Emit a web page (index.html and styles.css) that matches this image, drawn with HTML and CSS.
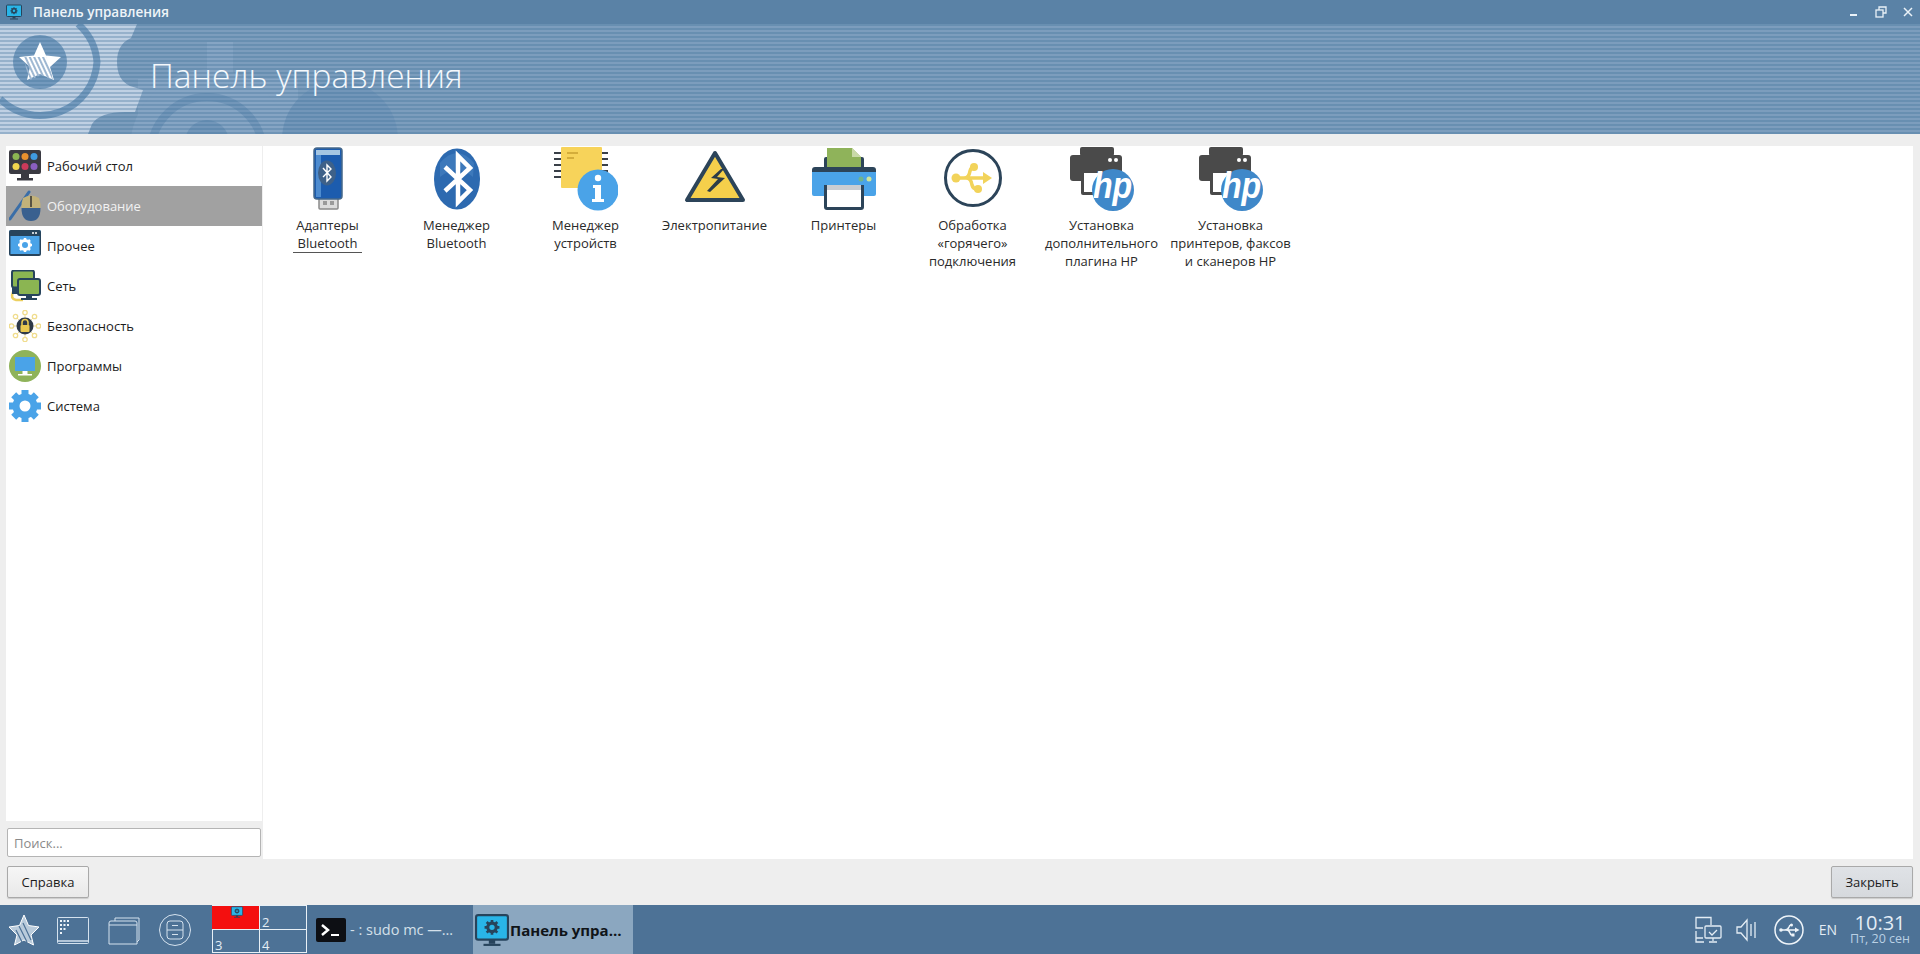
FILE: index.html
```html
<!DOCTYPE html>
<html lang="ru">
<head>
  <meta charset="UTF-8" />
  <title>Панель управления</title>
  <link rel="stylesheet" href="styles.css">
</head>
<body>
  <svg class="defs" width="0" height="0">
    <defs>
      <pattern id="banner-stripes" width="4" height="4" patternUnits="userSpaceOnUse">
        <rect width="4" height="2" fill="#3f7099" opacity=".32"/>
      </pattern>
      <pattern id="star-stripes" width="4" height="4" patternUnits="userSpaceOnUse" patternTransform="rotate(-25)">
        <rect width="2" height="4" fill="#9fb8d2"/>
      </pattern>
      <symbol id="gear" viewBox="0 0 32 32">
        <circle cx="16" cy="16" r="9" fill="none" stroke="#4aa3e8" stroke-width="7"/>
        <g stroke="#4aa3e8" stroke-width="7">
          <path d="M16 0v8M16 24v8M0 16h8M24 16h8M4.700 4.700l5 5M22.300 22.300l5 5M27.300 4.700l-5 5M9.700 22.300l-5 5"/>
        </g>
      </symbol>
      <symbol id="hp-printer" viewBox="0 0 64 64">
        <rect x="10" y="0" width="34" height="9" rx="2" fill="#4a4a4a"/>
        <path d="M0 11a3 3 0 0 1 3-3h46a3 3 0 0 1 3 3v21a2 2 0 0 1-2 2H3a3 3 0 0 1-3-3z" fill="#4a4a4a"/>
        <circle cx="40" cy="13" r="2" fill="#fff"/>
        <circle cx="46" cy="13" r="2" fill="#fff"/>
        <path d="M11 23h30v25H13a2 2 0 0 1-2-2z" fill="#4a4a4a"/>
        <rect x="14" y="26" width="26" height="19" fill="#fff"/>
        <circle cx="43" cy="43" r="21" fill="#3f88c9"/>
        <text x="44" y="49" transform="translate(-8 -15) scale(1.150 1.350)" class="hp-text">hp</text>
      </symbol>
      <symbol id="monitor-gear" viewBox="0 0 32 32">
        <rect x="1" y="2" width="30" height="23" rx="2" fill="#29b5e8" stroke="#27445c" stroke-width="2"/>
        <rect x="13" y="25" width="6" height="4" fill="#27445c"/>
        <rect x="8" y="29" width="16" height="2" fill="#27445c"/>
        <circle cx="16" cy="13.500" r="4" fill="none" stroke="#27445c" stroke-width="3"/>
        <path d="M16 6.500v3M16 17.500v3M9 13.500h3M20 13.500h3M11 8.500l2 2M19 16.500l2 2M21 8.500l-2 2M13 16.500l-2 2" stroke="#27445c" stroke-width="2.500"/>
      </symbol>
    </defs>
  </svg>

  <div class="app">
    <header class="titlebar">
      <svg class="titlebar-icon" width="16" height="16"><use href="#monitor-gear"/></svg>
      <span class="titlebar-name">Панель управления</span>
      <div class="window-buttons">
        <svg width="12" height="12" viewBox="0 0 12 12"><rect x="2" y="8" width="7" height="2" fill="#eaf2f8"/></svg>
        <svg width="12" height="12" viewBox="0 0 12 12" fill="none" stroke="#eaf2f8" stroke-width="1.300"><rect x="1" y="4" width="7" height="7"/><path d="M4 4V1h7v6H8"/></svg>
        <svg width="12" height="12" viewBox="0 0 12 12" stroke="#eaf2f8" stroke-width="1.500"><path d="M2 2l8 8M10 2l-8 8"/></svg>
      </div>
    </header>

    <div class="banner">
      <svg class="banner-art" width="1920" height="110" viewBox="0 0 1920 110">
        <rect x="138" y="55" width="160" height="55" fill="#86a5c4"/>
        <circle cx="210" cy="125" r="80" fill="#86a5c4"/>
        <rect x="207" y="18" width="26" height="50" fill="#86a5c4"/>
        <circle cx="207" cy="129" r="56" fill="none" stroke="#7296b9" stroke-width="8"/>
        <circle cx="207" cy="118" r="22" fill="#7296b9"/>
        <circle cx="340" cy="115" r="58" fill="#7296b9"/>
        <path d="M0 0H137L131 14Q117 20 117 38Q117 56 130 62L143 66L135 88H125Q100 88 92 100L88 110H0Z" fill="#bfd0e3"/>
        <path d="M0 75a57 57 0 0 0 97-37A57 57 0 0 0 78 0" fill="none" stroke="#7399bd" stroke-width="7"/>
        <circle cx="40" cy="38" r="27" fill="#7399bd"/>
        <rect width="1920" height="110" fill="url(#banner-stripes)"/>
        <path d="M40 18l6 13.500 15 1.500-11 10 4 13-14-6-13 6 3-13-11-10 15-1.500z" fill="#fff"/>
        <path d="M26 44l4 12 11-5 12 5-3-13-4-10-22 0z" fill="url(#star-stripes)"/>
      </svg>
      <h1 class="banner-title">Панель управления</h1>
    </div>

    <div class="workspace">
      <div class="left-col">
        <ul class="category-list">
          <li class="category">
            <svg class="category-icon" viewBox="0 0 32 32">
              <rect x="0" y="0" width="32" height="24" rx="2" fill="#3a3a42"/>
              <rect x="12" y="24" width="8" height="4" fill="#3a3a42"/><rect x="8" y="28" width="16" height="2.500" fill="#3a3a42"/>
              <circle cx="7" cy="6.500" r="3.500" fill="#8bb552"/><circle cx="16" cy="6.500" r="3.500" fill="#e8902e"/><circle cx="25" cy="6.500" r="3.500" fill="#3f9ae0"/>
              <circle cx="7" cy="16.500" r="3.500" fill="#f0d44e"/><circle cx="16" cy="16.500" r="3.500" fill="#cc3a5a"/><circle cx="25" cy="16.500" r="3.500" fill="#8a5fc0"/>
            </svg>
            <span>Рабочий стол</span>
          </li>
          <li class="category selected">
            <svg class="category-icon" viewBox="0 0 32 32">
              <path d="M1 29L20 2" stroke="#3a6ea8" stroke-width="3" stroke-linecap="round"/>
              <path d="M14 8q8-5 16 0 2 6 1.500 10H12.500q-.5-5 1.500-10z" fill="#c2b27a"/>
              <path d="M12.500 18h19q0 13-9.500 13t-9.500-13z" fill="#39608f"/>
              <path d="M22 6v11" stroke="#333" stroke-width="1.500"/>
            </svg>
            <span>Оборудование</span>
          </li>
          <li class="category">
            <svg class="category-icon" viewBox="0 0 32 32">
              <rect x="0" y="0" width="32" height="25" rx="2" fill="#4aa3e8"/>
              <path d="M0 2a2 2 0 0 1 2-2h28a2 2 0 0 1 2 2v4H0zM0 6h1.500v18h29V6H32v18a2 2 0 0 1-2 2H2a2 2 0 0 1-2-2z" fill="#27445c"/>
              <circle cx="24" cy="3" r="1" fill="#fff"/><circle cx="27" cy="3" r="1" fill="#fff"/>
              <circle cx="16" cy="15" r="4.500" fill="none" stroke="#fff" stroke-width="3"/>
              <path d="M16 8v3M16 19v3M9 15h3M20 15h3M11 10l2 2M19 18l2 2M21 10l-2 2M13 18l-2 2" stroke="#fff" stroke-width="2.500"/>
            </svg>
            <span>Прочее</span>
          </li>
          <li class="category">
            <svg class="category-icon" viewBox="0 0 32 32">
              <path d="M4 22q-3 7 3 8h7" fill="none" stroke="#ecd060" stroke-width="2.500"/>
              <rect x="3" y="0.500" width="22" height="17" rx="2" fill="#8bb552" stroke="#27445c" stroke-width="2"/>
              <rect x="3" y="17" width="8" height="7" fill="#27445c"/>
              <rect x="9" y="9" width="22" height="16" rx="2" fill="#8bb552" stroke="#27445c" stroke-width="2"/>
              <rect x="17" y="26" width="6" height="2" fill="#27445c"/><rect x="12" y="28" width="16" height="2" fill="#27445c"/>
            </svg>
            <span>Сеть</span>
          </li>
          <li class="category">
            <svg class="category-icon" viewBox="0 0 32 32">
              <g stroke="#f1de9a" stroke-width="1">
                <path d="M16 16L4 16M16 16L28 16M16 16L16 4M16 16L16 28M16 16L7 7M16 16L25 7M16 16L7 25M16 16L25 25"/>
              </g>
              <g fill="#fff" stroke="#f0dd8e" stroke-width="1.300">
                <circle cx="2.500" cy="16" r="2.200"/><circle cx="29.500" cy="16" r="2.200"/><circle cx="16" cy="2.500" r="2.200"/><circle cx="16" cy="29.500" r="2.200"/>
                <circle cx="6.500" cy="6.500" r="2.200"/><circle cx="25.500" cy="6.500" r="2.200"/><circle cx="6.500" cy="25.500" r="2.200"/><circle cx="25.500" cy="25.500" r="2.200"/>
              </g>
              <circle cx="16" cy="16" r="8.500" fill="#2f3a48"/>
              <rect x="11.500" y="15" width="9" height="7" rx="1" fill="#e8c850"/>
              <path d="M13 15v-2.500a3 3 0 0 1 6 0V15" fill="none" stroke="#e8c850" stroke-width="1.600"/>
            </svg>
            <span>Безопасность</span>
          </li>
          <li class="category">
            <svg class="category-icon" viewBox="0 0 32 32">
              <circle cx="16" cy="16" r="16" fill="#8fb35a"/>
              <rect x="6" y="7" width="20" height="14" fill="#4aa3e8"/>
              <rect x="13.500" y="21" width="5" height="3" fill="#fff"/><rect x="9" y="24" width="14" height="1.500" fill="#fff"/>
            </svg>
            <span>Программы</span>
          </li>
          <li class="category">
            <svg class="category-icon" viewBox="0 0 32 32"><use href="#gear"/></svg>
            <span>Система</span>
          </li>
        </ul>
        <input class="search" type="text" placeholder="Поиск...">
      </div>

      <main class="applets">
        <div class="applet">
          <svg class="applet-icon" viewBox="0 0 64 64">
            <path d="M23 50h19v11a1 1 0 0 1-1 1H24a1 1 0 0 1-1-1z" fill="#dcdcdc" stroke="#8a8a8a" stroke-width="1.500"/>
            <rect x="27" y="54" width="4" height="4" fill="#9a9a9a"/><rect x="34" y="54" width="4" height="4" fill="#9a9a9a"/>
            <rect x="18" y="1" width="28" height="51" rx="3" fill="#1c5cae" stroke="#46688a" stroke-width="1.500"/>
            <rect x="20" y="3" width="24" height="5" fill="#a5c6e2"/>
            <path d="M20 8h5v42h-5z" fill="#4e8ccf"/>
            <ellipse cx="31" cy="26" rx="9" ry="12.500" fill="#3e6189"/>
            <path d="M27 21l8 9-4 4V18l4 4-8 8" fill="none" stroke="#fff" stroke-width="1.400"/>
          </svg>
          <span class="applet-label focused">Адаптеры<br>Bluetooth</span>
        </div>
        <div class="applet">
          <svg class="applet-icon" viewBox="0 0 64 64">
            <ellipse cx="32" cy="32" rx="23" ry="30.500" fill="#2d6ab0"/>
            <path d="M15 16Q32-4 49 16L48 30Q32 16 15 30z" fill="#4a85c4" opacity=".55"/>
            <path d="M20 20l25 23-12 12V9l12 12-25 23" fill="none" stroke="#fff" stroke-width="4.500"/>
          </svg>
          <span class="applet-label">Менеджер<br>Bluetooth</span>
        </div>
        <div class="applet">
          <svg class="applet-icon" viewBox="0 0 64 64">
            <g stroke="#3a4048" stroke-width="2.200">
              <path d="M0 6h8M0 12h8M0 18h8M0 24h8M0 30h8M47 6h7M47 12h7M47 18h7M47 24h7"/>
            </g>
            <rect x="7" y="0" width="41" height="41" rx="1" fill="#f7d35a"/>
            <path d="M13 6h11M13 11h7" stroke="#c9a130" stroke-width="1.300"/>
            <circle cx="44" cy="43" r="20.500" fill="#4aa3e8"/>
            <circle cx="44" cy="31" r="3.200" fill="#fff"/>
            <path d="M39 38h8v14h3v3H38v-3h3V41h-2z" fill="#fff"/>
          </svg>
          <span class="applet-label">Менеджер<br>устройств</span>
        </div>
        <div class="applet">
          <svg class="applet-icon" viewBox="0 0 64 64">
            <path d="M32 6L4 53h56z" fill="#f5cf4b" stroke="#2c4459" stroke-width="4" stroke-linejoin="round"/>
            <path d="M38 22L28 31l7 1-11 12 3 1 15-14-8-1 7-8z" fill="#2c3c48"/>
          </svg>
          <span class="applet-label">Электропитание</span>
        </div>
        <div class="applet">
          <svg class="applet-icon" viewBox="0 0 64 64">
            <rect x="12" y="10" width="40" height="24" rx="2" fill="#2c4459"/>
            <path d="M15 1h25l9 9v14H15z" fill="#8fb35a"/>
            <path d="M40 1l9 9h-9z" fill="#c9d9a8"/>
            <path d="M0 23a3 3 0 0 1 3-3h58a3 3 0 0 1 3 3v2H0z" fill="#2c4459"/>
            <path d="M0 25h64v22a2 2 0 0 1-2 2H2a2 2 0 0 1-2-2z" fill="#4aa3e8"/>
            <circle cx="49" cy="32" r="2.500" fill="#6fb38c"/><circle cx="57" cy="32" r="2.500" fill="#cfe59a"/>
            <path d="M12 38h40v22a3 3 0 0 1-3 3H15a3 3 0 0 1-3-3z" fill="#2c4459"/>
            <rect x="15" y="38" width="34" height="5" fill="#c9cdd2"/>
            <rect x="15" y="43" width="34" height="17" fill="#fff"/>
          </svg>
          <span class="applet-label">Принтеры</span>
        </div>
        <div class="applet">
          <svg class="applet-icon" viewBox="0 0 64 64">
            <circle cx="32" cy="31" r="27.500" fill="#fff" stroke="#2c4459" stroke-width="3"/>
            <g fill="none" stroke="#f2d35a" stroke-width="3.500">
              <path d="M14 31h32M23 31Q28 31 29 24Q30 20 33 20M25 31Q30 31 31 38Q32 42 36 42"/>
            </g>
            <circle cx="15" cy="31" r="4.500" fill="#f2d35a"/>
            <circle cx="33" cy="20" r="4" fill="#f2d35a"/>
            <circle cx="37" cy="42" r="4" fill="#f2d35a"/>
            <path d="M42 25l9 6-9 6z" fill="#f2d35a"/>
          </svg>
          <span class="applet-label">Обработка<br>«горячего»<br>подключения</span>
        </div>
        <div class="applet">
          <svg class="applet-icon"><use href="#hp-printer"/></svg>
          <span class="applet-label">Установка<br>дополнительного<br>плагина HP</span>
        </div>
        <div class="applet">
          <svg class="applet-icon"><use href="#hp-printer"/></svg>
          <span class="applet-label">Установка<br>принтеров, факсов<br>и сканеров HP</span>
        </div>
      </main>
    </div>

    <div class="dialog-buttons">
      <button class="btn">Справка</button>
      <button class="btn btn-default">Закрыть</button>
    </div>

    <footer class="taskbar">
      <svg class="start" width="32" height="32" viewBox="0 0 32 32">
        <path d="M16 1l4.500 10.500L31 13l-8 8 2.500 10L16 26l-9.500 5L9 21l-8-8 10.500-1.500z" fill="#b9cbdb" stroke="#fff"/>
        <path d="M11 12l8 16M15 9l8 17M8 16l6 12" stroke="#4d7296" stroke-width="1.200"/>
      </svg>
      <svg class="launcher" width="32" height="32" viewBox="0 0 32 32" fill="none" stroke="#d5e2ee" stroke-width="1">
        <rect x=".5" y="3.500" width="31" height="26" rx="1"/>
        <path d="M.5 27h31" stroke-width="1.500"/>
        <path d="M3 6h2v2H3zM6.500 6h2v2h-2zM10 6h2v2h-2zM3 10h2v2H3zM6.500 10h2v2h-2zM10 10h2v2h-2zM3 14h2v2H3zM6.500 14h2v2h-2zM3 18h2v2H3z" fill="#eef4f9" stroke="none"/>
      </svg>
      <svg class="launcher" width="32" height="32" viewBox="0 0 32 32" fill="none" stroke="#d5e2ee" stroke-width="1">
        <path d="M7 7V4h24v22l-2 2"/>
        <path d="M1 9q0-2 2-2h24q2 0 2 2v21H1z"/>
        <path d="M1 11h28"/>
      </svg>
      <svg class="launcher" width="32" height="32" viewBox="0 0 32 32" fill="none" stroke="#d5e2ee" stroke-width="1">
        <circle cx="16" cy="16" r="15.500"/>
        <rect x="8" y="7" width="16" height="18" rx="3"/>
        <path d="M8 16h16M13 11.500h6M13 20.500h6"/>
      </svg>

      <div class="pager">
        <div class="desk desk-active">
          <svg width="14" height="12"><use href="#monitor-gear"/></svg>
        </div>
        <div class="desk">2</div>
        <div class="desk">3</div>
        <div class="desk">4</div>
      </div>

      <div class="task">
        <svg width="30" height="24" viewBox="0 0 30 24">
          <rect width="30" height="24" rx="2" fill="#0d0f14"/>
          <path d="M6 7l6 5-6 5" fill="none" stroke="#fff" stroke-width="2.500"/>
          <rect x="15" y="16" width="8" height="2" fill="#fff"/>
        </svg>
        <span>- : sudo mc —…</span>
      </div>
      <div class="task task-active">
        <svg width="34" height="34"><use href="#monitor-gear"/></svg>
        <span>Панель упра…</span>
      </div>

      <div class="tray">
        <svg width="28" height="28" viewBox="0 0 28 28" fill="none" stroke="#e4edf5" stroke-width="1.300">
          <path d="M9 12H2V1.500h15V9M2 15v11h8M2 22h7"/>
          <rect x="11" y="10" width="16" height="12" rx="1"/>
          <path d="M15 16l3 3 5-5M19 22v3M15 26h8"/>
        </svg>
        <svg class="tray-speaker" width="20" height="26" viewBox="0 0 20 26" fill="none" stroke="#e4edf5" stroke-width="1.300">
          <path d="M1 10v6h4l6 7V3L5 10z"/>
          <path d="M15 7v12M19 5v16"/>
        </svg>
        <svg class="tray-usb" width="30" height="30" viewBox="0 0 30 30" fill="none" stroke="#eef4f9" stroke-width="1.500">
          <circle cx="15" cy="15" r="14"/>
          <path d="M7 15h15M11 15q3 0 4-3 .5-2 2-2M12 15q3 0 4 3 .5 2 2 2"/>
          <circle cx="7" cy="15" r="1.800" fill="#eef4f9" stroke="none"/>
          <circle cx="17.500" cy="10" r="1.500" fill="#eef4f9" stroke="none"/>
          <rect x="17.500" y="18.500" width="3" height="3" fill="#eef4f9" stroke="none"/>
          <path d="M21 12.500l4.500 2.500-4.500 2.500z" fill="#eef4f9" stroke="none"/>
        </svg>
        <span class="tray-lang">EN</span>
        <div class="clock">
          <span class="clock-time">10:31</span>
          <span class="clock-date">Пт, 20 сен</span>
        </div>
      </div>
    </footer>
  </div>
</body>
</html>
```

FILE: styles.css
```css
* {
  box-sizing: border-box;
}
body {
  margin: 0;
  font-family: 'Open Sans', 'Noto Sans', sans-serif;
  font-size: 13px;
  color: #1c1c1c;
  background: #eeeeee;
  overflow: hidden;
}
.defs {
  position: absolute;
}
.hp-text {
  font-family: 'Liberation Sans', sans-serif;
  font-style: italic;
  font-weight: 700;
  font-size: 28px;
  fill: #fff;
  text-anchor: middle;
}
.app {
  height: 100vh;
  display: flex;
  flex-direction: column;
}

/* --- window title --- */
.titlebar {
  height: 24px;
  flex-shrink: 0;
  background: #5a82a6;
  color: #eef4f8;
  display: flex;
  align-items: center;
  padding-left: 6px;
}
.titlebar-icon {
  margin-right: 11px;
}
.titlebar-name {
  font-weight: 600;
  font-size: 13.500px;
}
.window-buttons {
  margin-left: auto;
  display: flex;
  gap: 15px;
  padding-right: 6px;
}

/* --- banner --- */
.banner {
  height: 110px;
  flex-shrink: 0;
  background: #7c9dbd;
  position: relative;
  overflow: hidden;
  display: flex;
  align-items: center;
  padding-left: 150px;
}
.banner-art {
  position: absolute;
  left: 0;
  top: 0;
}
.banner-title {
  position: relative;
  margin: 0 0 9px;
  font-weight: 300;
  font-size: 33.400px;
  color: #f4f8fc;
}

/* --- main area --- */
.workspace {
  flex: 1;
  min-height: 0;
  display: flex;
  gap: 1px;
  padding: 12px 7px 0 6px;
}
.left-col {
  width: 256px;
  flex-shrink: 0;
  display: flex;
  flex-direction: column;
  gap: 7px;
  padding-bottom: 2px;
}
.category-list {
  flex: 1;
  margin: 0;
  padding: 0;
  list-style: none;
  background: #fff;
}
.category {
  height: 40px;
  display: flex;
  align-items: center;
  gap: 6px;
  padding-left: 3px;
}
.category-icon {
  width: 32px;
  height: 32px;
  flex-shrink: 0;
}
.category.selected {
  background: #a1a1a1;
  color: #f2f2f2;
}
.search {
  height: 29px;
  margin: 0 0 0 1px;
  width: 254px;
  border: 1px solid #b4b4b4;
  border-radius: 2px;
  padding: 0 6px;
  font: inherit;
  background: #fff;
}
.search::placeholder {
  color: #8a8a8a;
}
.applets {
  flex: 1;
  background: #fff;
  display: flex;
  align-items: flex-start;
}
.applet {
  width: 129px;
  display: flex;
  flex-direction: column;
  align-items: center;
  padding-top: 1px;
  text-align: center;
  line-height: 18px;
  color: #2a2a2a;
}
.applet-icon {
  width: 64px;
  height: 64px;
  margin-bottom: 5px;
}
.applet-label {
  padding: 0 4px;
  white-space: nowrap;
}
.applet-label.focused {
  border-bottom: 1px solid #555;
  padding: 0 3px;
}

/* --- dialog buttons --- */
.dialog-buttons {
  height: 46px;
  flex-shrink: 0;
  display: flex;
  justify-content: space-between;
  padding: 7px 7px 0;
}
.btn {
  width: 82px;
  height: 32px;
  font: inherit;
  color: #1c1c1c;
  background: linear-gradient(180deg, #f6f6f6, #e9e9e9);
  border: 1px solid #a9a9a9;
  border-radius: 2px;
  box-shadow: 0 1px 1px rgba(0, 0, 0, 0.15);
}
.btn-default {
  background: linear-gradient(180deg, #dfe2e6, #d6d9dd);
}

/* --- task bar --- */
.taskbar {
  height: 49px;
  flex-shrink: 0;
  background: #4d7296;
  display: flex;
  align-items: stretch;
  color: #e4edf5;
}
.start {
  align-self: center;
  margin-left: 8px;
  margin-right: 17px;
}
.launcher {
  align-self: center;
  margin-right: 19px;
}
.pager {
  width: 95px;
  margin-left: 2px;
  display: grid;
  grid-template-columns: 1fr 1fr;
  grid-template-rows: 23px 23px;
  border: 1px solid #e8f0f6;
  border-left: 0;
  height: 48px;
  margin-bottom: 1px;
}
.desk {
  border-left: 1px solid #e8f0f6;
  font-size: 13px;
  line-height: 14px;
  display: flex;
  align-items: flex-end;
  padding-left: 2px;
}
.desk:nth-child(n+3) {
  border-top: 1px solid #e8f0f6;
}
.desk-active {
  background: #f40f0f;
  border-left: 0;
  justify-content: center;
  align-items: flex-start;
}
.task {
  display: flex;
  align-items: center;
  gap: 4px;
  font-size: 14.500px;
  color: #d4e0ea;
  white-space: nowrap;
  width: 167px;
  padding-left: 9px;
}
.task-active {
  width: 160px;
  padding-left: 2px;
  gap: 1px;
  margin-left: -1px;
  background: #8ba7c0;
  color: #101418;
  font-size: 15px;
  font-weight: 700;
}
.tray {
  margin-left: auto;
  display: flex;
  align-items: center;
  padding-right: 10px;
}
.tray-speaker {
  margin-left: 14px;
}
.tray-usb {
  margin-left: 18px;
}
.tray-lang {
  margin-left: 15px;
  font-size: 14px;
}
.clock {
  margin-left: 13px;
  display: flex;
  flex-direction: column;
  align-items: center;
}
.clock-time {
  font-size: 20px;
  line-height: 18px;
}
.clock-date {
  font-size: 12.500px;
  line-height: 13px;
  color: #b9d0e4;
}
```
